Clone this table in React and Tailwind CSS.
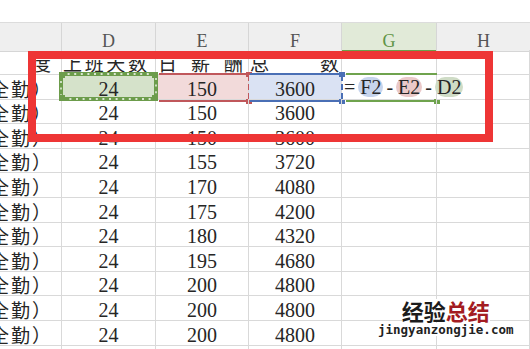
import React from 'react';

const COLS = 'grid grid-cols-[62px_94px_93px_93px_95px_93px]';
const LINE = 'relative border-r border-b border-[#d9d9d9]';
const NUM = `${LINE} pt-[4px] text-center text-[20px] leading-[20px]`;
const CJK = "font-['Noto_Sans_CJK_SC','Noto_Sans_CJK_JP',sans-serif]";

const rows = [
  ['24', '150', '3600'],
  ['24', '150', '3600'],
  ['24', '155', '3720'],
  ['24', '170', '4080'],
  ['24', '175', '4200'],
  ['24', '180', '4320'],
  ['24', '195', '4680'],
  ['24', '200', '4800'],
  ['24', '200', '4800'],
  ['24', '200', '4800'],
  ['24', '200', '4800'],
];

function NameCell({ text }) {
  return (
    <div className={`${LINE} flex justify-end overflow-hidden pt-[4px] pr-[8px] ${CJK} text-[19px] leading-[20px] tracking-[2px] whitespace-nowrap`}>
      <span>{text}</span>
    </div>
  );
}

// title row: only the lower part of the words shows
function TitleCell({ className, children }) {
  return (
    <div className={LINE}>
      <div className="mt-[10px] h-[14px] overflow-hidden">
        <div className={`-mt-[7px] flex leading-[20px] ${className}`}>{children}</div>
      </div>
    </div>
  );
}

function Handle({ className }) {
  return <div className={`absolute w-[6px] h-[5px] ${className}`} />;
}

function Ants() {
  return (
    <svg className="absolute left-[-3px] top-[-3px] w-[99px] h-[29px] z-10" viewBox="0 0 99 29">
      <rect x="2" y="2" width="95" height="25" fill="none" stroke="#6c9c4b" strokeWidth="4" />
      <rect x="2" y="2" width="95" height="25" fill="none" stroke="#ffffff" strokeWidth="1.3" strokeDasharray="2 4.6" />
      <rect x="0" y="0" width="6" height="6" fill="#6c9c4b" />
      <rect x="93" y="0" width="6" height="6" fill="#6c9c4b" />
      <rect x="0" y="23" width="6" height="6" fill="#6c9c4b" />
      <rect x="93" y="23" width="6" height="6" fill="#6c9c4b" />
    </svg>
  );
}

function Pill({ bg, children }) {
  return <span className={`rounded-full px-[2px] ${bg}`}>{children}</span>;
}

export default function App() {
  return (
    <div className="relative w-[530px] h-[349px] overflow-hidden bg-white font-['Liberation_Serif',serif] text-[#262626]">
      <div className="h-[23px] border-b border-[#dcdcdc]" />

      {/* column letters */}
      <div className={`${COLS} h-[27px] text-[18px] leading-[18px] text-[#555] text-center`}>
        <div className="bg-[#efefef] border-r border-b border-[#d6d6d6]" />
        <div className="bg-[#efefef] border-r border-b border-[#d6d6d6] pt-[9px]">D</div>
        <div className="bg-[#efefef] border-r border-b border-[#d6d6d6] pt-[9px]">E</div>
        <div className="bg-[#efefef] border-r border-b border-[#d6d6d6] pt-[9px]">F</div>
        <div className="bg-[#e1ead8] border-r border-[#d6d6d6] border-b-2 border-b-[#6ba04b] pt-[9px] text-[#5f9446]">G</div>
        <div className="bg-[#efefef] border-b border-[#d6d6d6] pt-[9px]">H</div>
      </div>

      {/* row 1: titles */}
      <div className={`${COLS} h-[24.6px] ${CJK} text-[19px]`}>
        <TitleCell className="justify-end pr-[10px]"><span>度</span></TitleCell>
        <TitleCell className="justify-between pl-[1px] pr-[8px]">
          <span>上</span><span>班</span><span>天</span><span>数</span>
        </TitleCell>
        <TitleCell className="justify-between pl-[2px] pr-[5px]">
          <span>日</span><span>薪</span><span>酬</span>
        </TitleCell>
        <TitleCell className="justify-between pl-[1px] pr-[2px]">
          <span>总</span><span>数</span>
        </TitleCell>
        <div className={LINE} />
        <div className={LINE} />
      </div>

      {/* row 2: referenced cells */}
      <div className={`${COLS} h-[24.6px]`}>
        <NameCell text="（全勤）" />
        <div className={`${NUM} bg-[#d5e2ca]`}>
          24
          <Ants />
        </div>
        <div className={`${NUM} bg-[#f2dada]`}>
          150
          <div className="absolute left-[3px] right-[-2px] top-[-2px] h-[2px] bg-[#c0575b]" />
          <div className="absolute left-[3px] right-[-2px] bottom-[-3px] h-[2px] bg-[#c0575b]" />
          <div className="absolute right-[-2px] top-0 bottom-0 border-r-2 border-dashed border-[#c0575b]" />
          <Handle className="right-[-4px] top-[-3px] bg-[#c0575b]" />
          <Handle className="right-[-4px] bottom-[-5px] bg-[#c0575b]" />
        </div>
        <div className={`${NUM} bg-[#dae2f3]`}>
          3600
          <div className="absolute left-[1px] right-[-2px] top-[-2px] h-[2px] bg-[#4a6fb5]" />
          <div className="absolute left-[1px] right-[-2px] bottom-[-3px] h-[2px] bg-[#4a6fb5]" />
          <div className="absolute right-[-2px] top-0 bottom-0 border-r-2 border-dashed border-[#4a6fb5]" />
          <Handle className="right-[-4px] top-[-3px] bg-[#4a6fb5]" />
          <Handle className="right-[-4px] bottom-[-5px] bg-[#4a6fb5]" />
        </div>
        <div className={`${LINE} flex items-center pl-[2px] pt-[1px] text-[20px] leading-[20px]`}>
          <span className="mr-[3px]">=</span>
          <Pill bg="bg-[#c6d4ec]">F2</Pill>
          <span className="mx-[3px]">-</span>
          <Pill bg="bg-[#eac9c9]">E2</Pill>
          <span className="mx-[3px]">-</span>
          <Pill bg="bg-[#cfdcc6]">D2</Pill>
          <div className="absolute left-[4px] right-[-1px] top-[-2px] h-[2px] bg-[#6fa34e]" />
          <div className="absolute left-[4px] right-[-1px] bottom-[-3px] h-[2px] bg-[#6fa34e]" />
          <Handle className="right-[-4px] bottom-[-5px] bg-[#6fa34e]" />
        </div>
        <div className={LINE} />
      </div>

      {rows.map((r, i) => (
        <div key={i} className={`${COLS} h-[24.6px]`}>
          <NameCell text="（全勤）" />
          <div className={NUM}>{r[0]}</div>
          <div className={NUM}>{r[1]}</div>
          <div className={NUM}>{r[2]}</div>
          <div className={LINE} />
          <div className={LINE} />
        </div>
      ))}

      {/* red frame drawn over the sheet */}
      <div className="absolute left-[28px] top-[51px] w-[465px] h-[91px] border-[8px] border-[#ee3535]" />

      {/* watermark */}
      <div className="absolute left-[378px] top-[299px] flex flex-col items-center gap-[2px]">
        <div className={`${CJK} bg-white text-[22px] leading-[22px] font-bold`}>
          <span className="text-[#1c1c1c]">经验</span>
          <span className="text-[#a31c22]">总结</span>
        </div>
        <div className="bg-white font-['DejaVu_Sans_Mono',monospace] font-bold text-[12.5px] leading-[13px] text-[#222]">
          jingyanzongjie.com
        </div>
      </div>
    </div>
  );
}
